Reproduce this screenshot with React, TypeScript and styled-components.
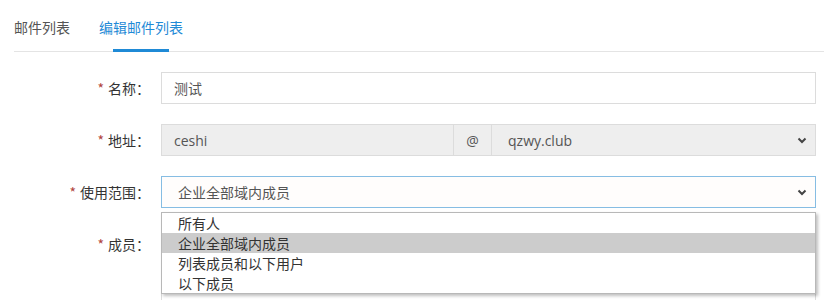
import styled, { createGlobalStyle } from 'styled-components'

const GlobalStyle = createGlobalStyle`
  body {
    margin: 0;
    background: #fff;
    font-family: 'Open Sans', 'Noto Sans CJK SC', sans-serif;
    font-size: 14px;
    color: #333;
  }
`

const tabs = [
  { name: '邮件列表', active: false },
  { name: '编辑邮件列表', active: true },
]

const scopeOptions = ['所有人', '企业全部域内成员', '列表成员和以下用户', '以下成员']

const Chevron = () => (
  <svg width='10' height='7' viewBox='0 0 10 7'>
    <path d='M1.5 1.5 L5 5 L8.5 1.5' fill='none' stroke='#444' strokeWidth='2' />
  </svg>
)

const App = (): JSX.Element => {
  return (
    <>
      <GlobalStyle />
      <Page>
        <TabBar>
          {tabs.map(tab => (
            <Tab key={tab.name} active={tab.active}>
              {tab.name}
            </Tab>
          ))}
        </TabBar>

        <Form>
          <Label>
            <Star>*</Star> 名称：
          </Label>
          <Field>
            <TextBox>测试</TextBox>
          </Field>

          <Label>
            <Star>*</Star> 地址：
          </Label>
          <Field>
            <Group>
              <TextBox disabled grow>ceshi</TextBox>
              <Addon>@</Addon>
              <SelectBox disabled width='325px'>
                <span>qzwy.club</span>
                <Chevron />
              </SelectBox>
            </Group>
          </Field>

          <Label>
            <Star>*</Star> 使用范围：
          </Label>
          <Field>
            <SelectBox focused>
              <span>企业全部域内成员</span>
              <Chevron />
            </SelectBox>
            <OptionList>
              {scopeOptions.map(opt => (
                <Option key={opt} selected={opt === '企业全部域内成员'}>
                  {opt}
                </Option>
              ))}
            </OptionList>
          </Field>

          <Label>
            <Star>*</Star> 成员：
          </Label>
          <Field>
            <MemberBox />
          </Field>
        </Form>
      </Page>
    </>
  )
}

export default App

const Page = styled.div`
  width: 824px;
  height: 300px;
  overflow: hidden;
`

const TabBar = styled.div`
  display: flex;
  gap: 29px;
  margin-left: 14px;
  height: 52px;
  border-bottom: 1px solid #e4e4e4;
  box-sizing: border-box;
`

const Tab = styled.div<{ active: boolean }>`
  position: relative;
  display: flex;
  align-items: center;
  padding-top: 3px;
  font-family: 'Noto Sans CJK SC', sans-serif;
  font-size: 14px;
  color: ${p => (p.active ? '#1f8ad6' : '#555')};

  &::after {
    content: '';
    display: ${p => (p.active ? 'block' : 'none')};
    position: absolute;
    left: 50%;
    bottom: -1px;
    width: 56px;
    margin-left: -28px;
    height: 3px;
    background: #1f8ad6;
  }
`

const Form = styled.div`
  display: grid;
  grid-template-columns: 161px 655px;
  row-gap: 20px;
  padding-top: 20px;
`

const Label = styled.div`
  display: flex;
  align-items: center;
  justify-content: flex-end;
  height: 32px;
  padding-right: 11px;
  font-family: 'Noto Sans CJK SC', sans-serif;
  font-size: 14px;
  color: #333;
`

const Star = styled.span`
  color: #b0443c;
  margin-right: 4px;
`

const Field = styled.div`
  position: relative;
`

const Group = styled.div`
  display: flex;
`

const TextBox = styled.div<{ disabled?: boolean; grow?: boolean }>`
  display: flex;
  align-items: center;
  ${p => (p.grow ? 'flex: 1;' : '')}
  height: 32px;
  box-sizing: border-box;
  padding: 0 12px;
  border: 1px solid #dcdcdc;
  background: ${p => (p.disabled ? '#eeeeee' : '#fff')};
  font-family: 'Open Sans', 'Noto Sans CJK SC', sans-serif;
  font-size: 14px;
  color: #555;
`

const Addon = styled.div`
  display: flex;
  align-items: center;
  justify-content: center;
  width: 39px;
  height: 32px;
  box-sizing: border-box;
  border: 1px solid #dcdcdc;
  margin: 0 -1px;
  background: #eeeeee;
  color: #555;
  font-size: 14px;
`

const SelectBox = styled.div<{ disabled?: boolean; focused?: boolean; width?: string }>`
  display: flex;
  align-items: center;
  justify-content: space-between;
  width: ${p => p.width ?? '100%'};
  height: 32px;
  box-sizing: border-box;
  padding: 0 8px 0 16px;
  border: 1px solid ${p => (p.focused ? '#86bde3' : '#dcdcdc')};
  background: ${p => (p.disabled ? '#eeeeee' : '#fffdfc')};
  font-family: 'Open Sans', 'Noto Sans CJK SC', sans-serif;
  font-size: 14px;
  color: #555;
`

const OptionList = styled.div`
  position: absolute;
  z-index: 10;
  top: 36px;
  left: 0;
  width: 100%;
  box-sizing: border-box;
  background: #fff;
  border: 1px solid #b8b8b8;
  box-shadow: 2px 2px 3px rgba(0, 0, 0, 0.25);
`

const Option = styled.div<{ selected: boolean }>`
  height: 20px;
  line-height: 20px;
  padding-left: 16px;
  font-family: 'Noto Sans CJK SC', sans-serif;
  font-size: 14px;
  color: #333;
  background: ${p => (p.selected ? '#cccccc' : '#fff')};
`

const MemberBox = styled.div`
  height: 100px;
  box-sizing: border-box;
  border: 1px solid #dcdcdc;
  background: #fff;
`
